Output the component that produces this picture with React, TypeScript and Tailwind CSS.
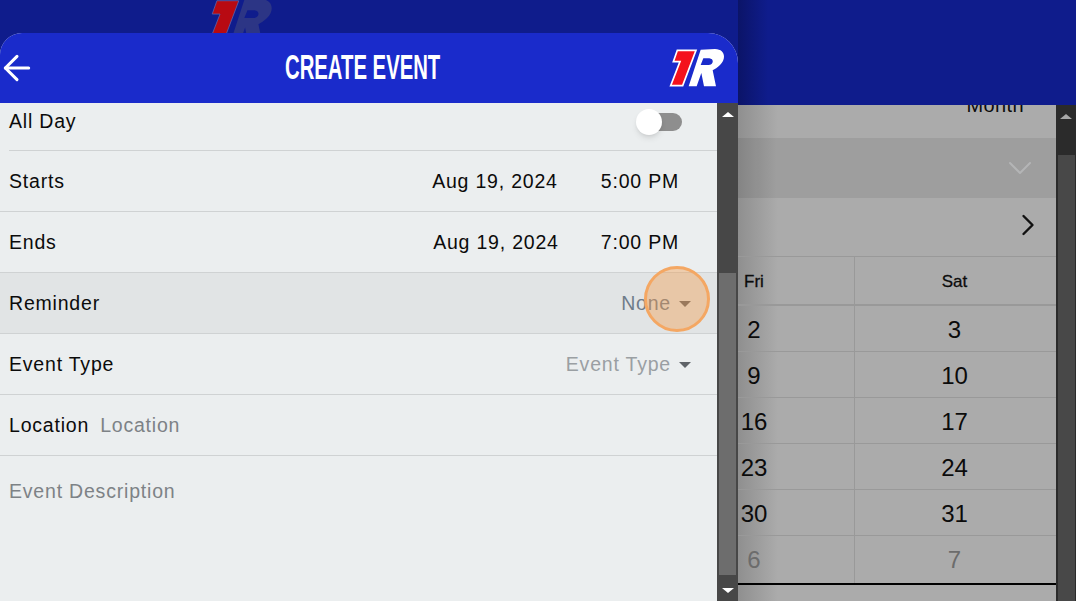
import React from 'react';
import { ArrowLeft, ChevronDown, ChevronRight } from 'lucide-react';

const weeks = [
  ['2', '3'],
  ['9', '10'],
  ['16', '17'],
  ['23', '24'],
  ['30', '31'],
];

function Logo({ dim = false, className = '' }: { dim?: boolean; className?: string }) {
  return (
    <svg viewBox="-3 -3 168 120" className={className}>
      <path
        d="M22 4 L78 4 L38 110 L2 110 L30 38 L10 38 Z"
        fill={dim ? '#b80a12' : '#f4121c'}
        stroke={dim ? '#5a66b0' : '#ffffff'}
        strokeWidth={dim ? 2 : 5}
        strokeLinejoin="miter"
      />
      <path
        d="M92 2 L135 0 C165 0 170 30 150 48 C142 56 135 60 128 64 L138 112 L102 112 L94 72 L80 112 L56 112 Z M100 28 L92 48 L115 48 C130 48 134 30 118 28 Z"
        fill={dim ? '#2c3585' : '#ffffff'}
        fillRule="evenodd"
      />
    </svg>
  );
}

function Caret() {
  return <span className="block w-0 h-0 border-x-[6px] border-x-transparent border-t-[6px] border-t-[#5f6368]" />;
}

function Row({ children, className = '' }: { children: React.ReactNode; className?: string }) {
  return <div className={`h-[61px] flex items-center pl-[9px] pr-[26px] pt-[1px] border-b border-[#cfd2d3] ${className}`}>{children}</div>;
}

export default function App() {
  return (
    <div className="relative w-[1076px] h-[601px] overflow-hidden bg-[#ababab] font-['Liberation_Sans',sans-serif] text-[#0b0b0b]">
      {/* page behind the sheet */}
      <div className="h-[105px] bg-[#0f1c8c] pl-[207px]">
        <Logo dim className="w-[66px] h-[47px] -translate-y-[2px]" />
      </div>

      {/* shadow cast by the sheet */}
      <div className="absolute left-[738px] top-[105px] w-[40px] h-[496px] bg-gradient-to-r from-[#8f8f8f] to-transparent" />
      <div className="absolute left-[738px] top-0 w-[30px] h-[105px] bg-gradient-to-r from-[#0b1468] to-transparent" />

      <div className="relative h-[496px] flex pl-[738px]">
        <div className="w-[318px] flex flex-col">
          <div className="h-[33px] relative overflow-hidden">
            <span className="absolute right-[32px] -top-[15px] text-[20px] tracking-[0.4px]">Month</span>
          </div>
          <div className="h-[60px] bg-black/[0.07] flex items-center justify-end pr-[16px]">
            <ChevronDown className="w-[40px] h-[40px] text-[#b4b5b6]" strokeWidth={1.2} />
          </div>
          <div className="h-[59px] flex items-center justify-end pr-[10px] pb-[4px] border-b border-[#999]">
            <ChevronRight className="w-[36px] h-[36px] text-[#111]" strokeWidth={1.6} />
          </div>
          <div className="h-[49px] flex border-b-2 border-[#999] pt-[3px] text-[17px] [-webkit-text-stroke:0.3px_#111]">
            <div className="w-[117px] pl-[6px] flex items-center border-r border-[#999] -mt-[3px] pt-[3px]">Fri</div>
            <div className="flex-1 flex items-center justify-center pr-[2px]">Sat</div>
          </div>
          {weeks.map((w) => (
            <div key={w[0]} className="h-[46px] flex border-b border-[#999] text-[24px]">
              <div className="w-[117px] flex items-center border-r border-[#999] pt-[3px]">
                <span className="w-[32px] text-center">{w[0]}</span>
              </div>
              <div className="flex-1 flex items-center justify-center pt-[3px] pr-[2px]">{w[1]}</div>
            </div>
          ))}
          <div className="h-[49px] flex border-b-2 border-black text-[24px] text-[#6c6c6c]">
            <div className="w-[117px] flex items-center border-r border-[#999] pt-[1px]">
              <span className="w-[32px] text-center">6</span>
            </div>
            <div className="flex-1 flex items-center justify-center pt-[1px] pr-[2px]">7</div>
          </div>
        </div>
        <div className="w-5 flex flex-col items-center bg-[#2b2b2b]">
          <div className="h-[50px] w-full shrink-0 flex justify-center pt-[9px]">
            <span className="w-0 h-0 border-x-[6px] border-x-transparent border-b-[5px] border-b-[#a8a8a8]" />
          </div>
          <div className="w-[17px] flex-1 bg-[#484848]" />
        </div>
      </div>

      {/* create event sheet */}
      <div className="absolute left-0 top-[33px] w-[738px] h-[568px] rounded-tl-[22px] rounded-tr-[30px] overflow-hidden flex flex-col bg-[#ebeeef]">
        <div className="h-[70px] shrink-0 bg-[#1a2bcb] flex items-center justify-between pr-[13px] relative">
          <ArrowLeft className="w-[40px] h-[40px] -ml-[3px] text-white" strokeWidth={1.8} />
          <span className="absolute left-[285px] top-[14px] origin-left scale-x-[0.58] text-white font-bold text-[35px] leading-[40px] whitespace-nowrap">CREATE EVENT</span>
          <Logo className="w-[56px] h-[40px]" />
        </div>
        <div className="flex-1 flex min-h-0">
          <div className="flex-1 flex flex-col text-[19.5px] tracking-[0.8px]">
            <div className="h-[48px] flex items-center justify-between ml-[9px] pr-[35px] pb-[10px] border-b border-[#cfd2d3]">
              <span>All Day</span>
              <span className="relative w-[46px] h-[26px] flex items-center">
                <span className="absolute right-0 w-[38px] h-[18px] rounded-full bg-[#8e8e8e]" />
                <span className="absolute left-0 w-[26px] h-[26px] rounded-full bg-white shadow-md" />
              </span>
            </div>
            <Row>
              <span>Starts</span>
              <span className="ml-auto">Aug 19, 2024</span>
              <span className="ml-[43px] mr-[12px]">5:00 PM</span>
            </Row>
            <Row>
              <span>Ends</span>
              <span className="ml-auto">Aug 19, 2024</span>
              <span className="ml-[42px] mr-[12px]">7:00 PM</span>
            </Row>
            <Row className="bg-[#e1e4e5]">
              <span>Reminder</span>
              <span className="ml-auto mr-[8px] text-[#6f7c8a]">None</span>
              <Caret />
            </Row>
            <Row>
              <span>Event Type</span>
              <span className="ml-auto mr-[8px] text-[#9a9fa3]">Event Type</span>
              <Caret />
            </Row>
            <Row>
              <span>Location</span>
              <span className="ml-[11px] text-[#7d8286]">Location</span>
            </Row>
            <div className="pl-[9px] pt-[21px] text-[#7d8286]">Event Description</div>
          </div>
          <div className="w-[21px] flex flex-col items-center bg-[#474747]">
            <div className="h-[170px] w-full shrink-0 flex justify-center pt-[9px]">
              <span className="w-0 h-0 border-x-[6px] border-x-transparent border-b-[5px] border-b-white" />
            </div>
            <div className="w-[17px] h-[302px] bg-[#6d6d6d]" />
            <div className="flex-1 w-full flex justify-center pt-[13px]">
              <span className="w-0 h-0 border-x-[6px] border-x-transparent border-t-[5px] border-t-white" />
            </div>
          </div>
        </div>
      </div>

      {/* tap highlight */}
      <div className="absolute left-[644px] top-[266px] w-[66px] h-[66px] rounded-full bg-[#f39a4a]/40 border-[3px] border-[#f4a763]" />
    </div>
  );
}
